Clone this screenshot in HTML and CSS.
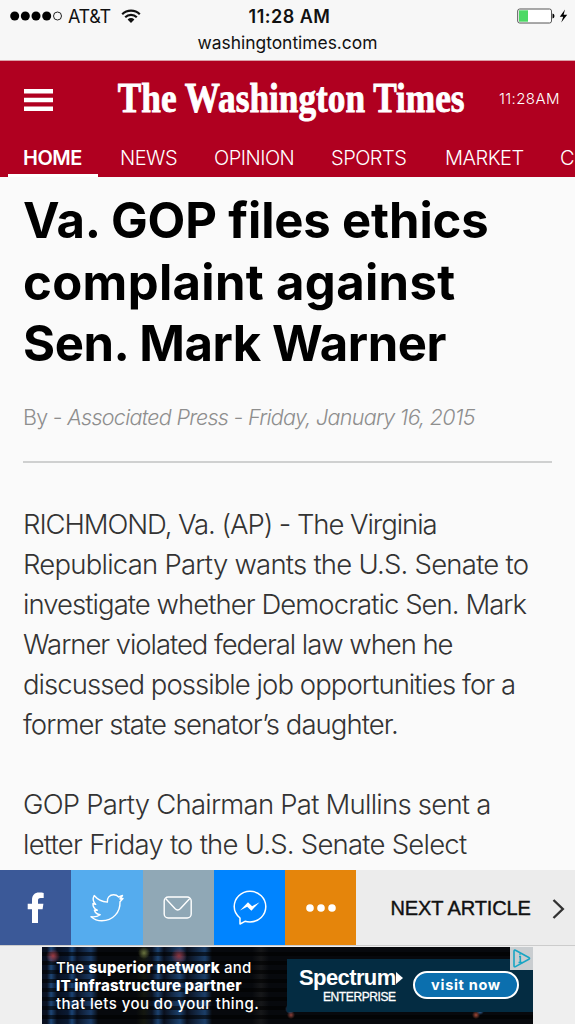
FILE: index.html
```html
<!DOCTYPE html>
<html lang="en">

<head>
    <meta charset="UTF-8">
    <meta name="viewport" content="width=device-width, initial-scale=1.0">
    <title>Va. GOP files ethics complaint against Sen. Mark Warner</title>
    <link rel="stylesheet" href="styles.css">
</head>

<body>
    <div class="status">
        <div class="carrier">
            <svg class="signal" width="53" height="10" viewBox="0 0 53 10">
                <circle cx="4.7" cy="5" r="4.5" />
                <circle cx="15.3" cy="5" r="4.5" />
                <circle cx="26" cy="5" r="4.5" />
                <circle cx="36.7" cy="5" r="4.5" />
                <circle class="empty" cx="47.5" cy="5" r="4" />
            </svg>
            <span class="name">AT&amp;T</span>
            <svg class="wifi" width="20" height="15" viewBox="0 0 20 15">
                <path d="M1.2 5.2a12.5 12.5 0 0 1 17.6 0M4.2 8.2a8.2 8.2 0 0 1 11.6 0" />
                <path class="dot" d="M6.6 10.4a4.9 4.9 0 0 1 6.8 0L10 14z" />
            </svg>
        </div>
        <div class="clock">11:28 AM</div>
        <div class="power">
            <svg width="52" height="16" viewBox="0 0 52 16">
                <rect class="case" x=".7" y="1" width="33.8" height="14" rx="2" />
                <rect class="level" x="2" y="2.3" width="9" height="11.4" />
                <path d="M35.5 5.5q2 .4 2 2.5t-2 2.5z" />
                <path d="M48 1.5l-5.2 7.2h3.4l-2 5.8 6-7.7h-3.6z" />
            </svg>
        </div>
        <div class="url">washingtontimes.com</div>
    </div>

    <header class="header">
        <div class="masthead">
            <svg class="menu" width="29" height="22" viewBox="0 0 29 22">
                <path d="M0 0h29v4.4H0zM0 8.8h29v4.4H0zM0 17.6h29V22H0z" />
            </svg>
            <svg class="logo" width="347" height="54" viewBox="0 0 347 54">
                <text transform="scale(.82 1)" x="1" y="39">The Washington Times</text>
            </svg>
            <span class="time">11:28AM</span>
        </div>
        <nav class="nav">
            <a class="active">HOME</a>
            <a class="news">NEWS</a>
            <a class="opinion">OPINION</a>
            <a class="sports">SPORTS</a>
            <a class="market">MARKET</a>
            <a class="last">C</a>
        </nav>
    </header>

    <main class="article">
        <h1>Va. GOP files ethics<br><span class="loose">complaint against</span><br><span class="tight">Sen. Mark Warner</span></h1>
        <p class="byline">By - <em>Associated Press - Friday, January 16, 2015</em></p>
        <div class="story">
            <p><span class="tight">RICHMOND, Va. (AP) - The Virginia</span><br>
                <span class="loose">Republican Party wants the U.S. Senate to</span><br>
                investigate whether Democratic Sen. Mark<br>
                <span class="tight">Warner violated federal law when he</span><br>
                discussed possible job opportunities for a<br>
                former state senator’s daughter.</p>
            <p class="loose">GOP Party Chairman Pat Mullins sent a<br>
                letter Friday to the U.S. Senate Select</p>
        </div>
    </main>

    <div class="share">
        <a class="facebook">
            <svg width="18" height="32" viewBox="0 0 18 32">
                <path d="M5 31V17.2H.7v-5.5H5V8.2C5 3.2 7.8.6 12 .6c2 0 3.6.1 4.7.3v5.2h-3c-2.2 0-2.7 1-2.7 2.6v3h5.4l-.8 5.5H11V31z" />
            </svg>
        </a>
        <a class="twitter">
            <svg width="34" height="28" viewBox="0 0 34 28">
                <path d="M1 22.7c3.5.5 6.7-.2 9.2-2-3-.4-5-2-5.8-4.5h2.9C4.5 15 2.8 12.5 2.9 9.6l2.8.8C3.2 8 2.5 4.6 4.2 1.5c3.3 4 7.9 6.2 13.2 6.6C16.7 4 19.6.8 23.6.8c2 0 3.8.8 5.1 2.2L32.5 1.5 30 5l3-.5-3 3.2C30.5 18 23 26.8 11.8 26.8 7.7 26.8 4 25.3 1 22.7z" />
            </svg>
        </a>
        <a class="mail">
            <svg width="30" height="23" viewBox="0 0 30 23">
                <rect x="1.2" y="1" width="27" height="21" rx="4" />
                <path d="M2.6 2.5l9.3 10q2.8 2.8 5.6 0l9.3-10" />
            </svg>
        </a>
        <a class="messenger">
            <svg width="34" height="36" viewBox="0 0 34 36">
                <path d="M7 34V28C3.5 25.2 1.2 21.2 1.2 16.6 1.2 8 8.2 1.2 17 1.2S32.8 8 32.8 16.6 25.8 32 17 32c-1.8 0-3.5-.2-5-.7z" />
                <path class="bolt" d="M7 20.5l8-8.3 4.1 4 7.4-4-8.1 8.5-4.2-4z" />
            </svg>
        </a>
        <a class="more">
            <svg width="30" height="8" viewBox="0 0 30 8">
                <circle cx="4" cy="4" r="3.8" />
                <circle cx="15" cy="4" r="3.8" />
                <circle cx="26" cy="4" r="3.8" />
            </svg>
        </a>
        <a class="next">
            <span>NEXT ARTICLE</span>
            <svg width="13" height="20" viewBox="0 0 13 20">
                <path d="M1.5 1l9.3 9-9.3 9" />
            </svg>
        </a>
    </div>

    <div class="bottom">
        <div class="ad">
            <p class="slogan">The <b>superior network</b> and<br><b>IT infrastructure partner</b><br><span class="last">that lets you do your thing.</span></p>
            <div class="panel">
                <div class="brand">
                    <div class="spectrum">
                        <span>Spectrum</span>
                        <svg width="7" height="12" viewBox="0 0 7 12">
                            <path d="M0 0l7 6-7 6z" />
                        </svg>
                    </div>
                    <div class="enterprise">ENTERPRISE</div>
                </div>
                <a class="visit">visit now</a>
            </div>
            <svg class="choices" width="23" height="23" viewBox="0 0 23 23">
                <path d="M4 4.2q0-1.6 1.5-.9l13.3 7.2q1.5.9 0 1.8L5.5 19.6Q4 20.3 4 18.7z" />
                <path d="M9 9.5h1.3v6M8.5 15.5h4M10 6.5v1.2" />
            </svg>
        </div>
    </div>
</body>

</html>
```
FILE: styles.css
```css
* {
    margin: 0;
    padding: 0;
    box-sizing: border-box;
}

body {
    display: flex;
    flex-direction: column;
    width: 575px;
    height: 1024px;
    overflow: hidden;
    background-color: #fafafa;
    font-family: "Liberation Sans", Arial, sans-serif;
}

svg {
    display: block;
    flex: none;
}

/* status bar */
.status {
    display: grid;
    grid-template-columns: 1fr auto 1fr;
    grid-template-rows: 32px 20px;
    align-items: center;
    flex: none;
    height: 61px;
    padding-left: 10px;
    padding-right: 6px;
    border-bottom: 1px solid #dba0a8;
    background-color: #f7f7f7;
    font-family: Inter, sans-serif;
    color: #111;
}

.carrier {
    display: flex;
    align-items: center;
}

.signal .empty {
    fill: none;
    stroke: #222;
    stroke-width: 1;
}

.name {
    margin-left: 5px;
    font-size: 18px;
    letter-spacing: -0.3px;
}

.wifi {
    margin-left: 10px;
    fill: none;
    stroke: #111;
    stroke-width: 2.2;
}

.wifi .dot {
    fill: #111;
    stroke: none;
}

.clock {
    font-size: 18px;
    font-weight: 600;
    letter-spacing: 0.5px;
}

.power {
    justify-self: end;
}

.power .case {
    fill: #fff;
    stroke: #555;
    stroke-width: 1;
}

.power .level {
    fill: #4cd964;
}

.url {
    grid-column: 1 / 4;
    justify-self: center;
    padding-right: 4px;
    font-size: 17.4px;
}

/* header */
.header {
    flex: none;
    height: 116px;
    background-color: #b00020;
    color: #fff;
}

.masthead {
    display: flex;
    align-items: center;
    height: 78px;
    padding-left: 24px;
}

.menu {
    fill: #fff;
}

.logo {
    margin-left: 64px;
    overflow: visible;
    fill: #fff;
    stroke: #fff;
    stroke-width: 0.9;
    font-family: "Liberation Serif", serif;
    font-size: 43px;
    font-weight: bold;
}

.time {
    margin-left: 35px;
    padding-bottom: 4px;
    font-family: Inter, sans-serif;
    font-size: 15px;
    font-weight: 300;
    letter-spacing: 0.4px;
}

.nav {
    display: flex;
    height: 38px;
    padding-left: 8px;
    font-family: Inter, sans-serif;
    font-size: 20px;
    font-weight: 300;
    line-height: 38px;
    white-space: nowrap;
}

.nav a {
    flex: none;
    letter-spacing: -0.5px;
}

.nav .active {
    width: 90px;
    padding-left: 15px;
    border-bottom: 3px solid #fff;
    font-weight: 600;
}

.nav .news {
    width: 94px;
    margin-left: 22px;
}

.nav .opinion {
    width: 117px;
}

.nav .sports {
    width: 114px;
}

.nav .market {
    width: 115px;
}

/* article */
.article {
    flex: 1;
    min-height: 0;
    padding: 13px 23px 0;
    overflow: hidden;
}

h1 {
    font-family: Inter, sans-serif;
    font-size: 49px;
    font-weight: 700;
    line-height: 61.5px;
    letter-spacing: -0.15px;
    color: #000;
    white-space: nowrap;
}

h1 .loose {
    letter-spacing: 0.35px;
}

h1 .tight {
    letter-spacing: -0.4px;
}

.byline {
    height: 88px;
    padding-top: 27px;
    border-bottom: 2px solid #cfd0d0;
    font-family: Inter, sans-serif;
    font-size: 21.5px;
    font-weight: 300;
    line-height: 30px;
    letter-spacing: -0.7px;
    color: #8e8e8e;
    white-space: nowrap;
}

.story {
    padding-top: 41px;
    font-family: Inter, sans-serif;
    font-size: 27.5px;
    font-weight: 300;
    line-height: 40px;
    letter-spacing: -0.95px;
    color: #333;
    white-space: nowrap;
}

.story p {
    margin-bottom: 40px;
}

.story .loose {
    letter-spacing: -0.76px;
}

.story .tight {
    letter-spacing: -1.06px;
}

/* share bar */
.share {
    display: flex;
    flex: none;
    height: 76px;
    border-bottom: 1px solid #ccc;
    background-color: #ececec;
}

.share a {
    display: flex;
    align-items: center;
    justify-content: center;
    width: 71.3px;
}

.share .facebook {
    background-color: #3b5998;
    fill: #fff;
}

.share .twitter {
    background-color: #55acee;
    fill: none;
    stroke: #fff;
    stroke-width: 1.4;
    stroke-linejoin: round;
}

.share .mail {
    background-color: #90a8b6;
    fill: none;
    stroke: #fff;
    stroke-width: 1.4;
}

.share .messenger {
    background-color: #0084ff;
    fill: none;
    stroke: #fff;
    stroke-width: 1.5;
    stroke-linejoin: round;
}

.share .messenger .bolt {
    fill: #fff;
    stroke: none;
}

.share .more {
    background-color: #e5850b;
    fill: #fff;
}

.share .next {
    justify-content: flex-start;
    flex: 1;
    padding-top: 2px;
    padding-left: 34px;
    font-size: 20px;
    letter-spacing: -0.1px;
    color: #111;
    white-space: nowrap;
}

.next span {
    -webkit-text-stroke: 0.4px #111;
}

.next svg {
    margin-left: 21px;
    fill: none;
    stroke: #333;
    stroke-width: 2.4;
}

/* ad */
.bottom {
    display: flex;
    flex: none;
    height: 78px;
    padding-top: 1px;
    padding-left: 42px;
    background-color: #efefef;
}

.ad {
    position: relative;
    display: flex;
    align-items: flex-start;
    width: 491px;
    background-color: #07090d;
    background-image:
        radial-gradient(circle at 11px 9px, #9c3a42 0, transparent 7px),
        radial-gradient(circle at 137px 9px, #8c3440 0, transparent 8px),
        radial-gradient(circle at 102px 6px, #6b7440 0, transparent 6px),
        radial-gradient(circle at 248px 62px, #3b76b8 0, transparent 5px),
        radial-gradient(circle at 249px 68px, #8b4038 0, transparent 4px),
        radial-gradient(circle at 434px 68px, #a34a38 0, transparent 4px),
        radial-gradient(circle at 438px 64px, #3b76b8 0, transparent 4px),
        repeating-linear-gradient(to bottom, transparent 0 5px, rgba(0, 0, 0, 0.6) 5px 9px),
        linear-gradient(to right, #091020 5px, #1e4777 9px, #081020 15px, #0a1a33 26px, #1b4475 30px, #0b1426 35px, #1a3b66 49px, #07090d 56px, #07090d 94px, #14170f 102px, #0a1120 110px, #1c426f 116px, #0a0f1c 122px, #1c426f 138px, #0a0f1c 145px, #1b3e68 163px, #07090d 170px, #07090d 210px, #161719 219px, #07090d 227px);
    color: #fff;
}

.slogan {
    width: 245px;
    padding-top: 12px;
    padding-left: 14px;
    font-family: Inter, sans-serif;
    font-size: 15px;
    font-weight: 500;
    line-height: 18px;
    letter-spacing: 0.2px;
    white-space: nowrap;
}

.slogan b {
    font-weight: 800;
}

.slogan .last {
    letter-spacing: 0.43px;
}

.panel {
    display: flex;
    align-items: flex-start;
    flex: 1;
    height: 53px;
    margin-top: 12px;
    padding-left: 12px;
    background-color: #042c42;
}

.brand {
    width: 114px;
    padding-top: 7px;
}

.spectrum {
    display: flex;
    align-items: center;
    height: 24px;
    font-size: 22px;
    font-weight: bold;
    letter-spacing: -0.6px;
}

.spectrum svg {
    fill: #fff;
}

.enterprise {
    padding-left: 24px;
    font-size: 12px;
    line-height: 14px;
    letter-spacing: -0.4px;
    -webkit-text-stroke: 0.3px #fff;
}

.visit {
    width: 106px;
    height: 28px;
    margin-top: 12px;
    border: 2px solid #fff;
    border-radius: 14px;
    background-color: #0b6fae;
    font-family: Inter, sans-serif;
    font-size: 14.5px;
    font-weight: 700;
    line-height: 24px;
    letter-spacing: 0.7px;
    text-align: center;
}

.choices {
    position: absolute;
    top: 0;
    right: 0;
    background-color: #c9cdd0;
    fill: none;
    stroke: #18a5c4;
    stroke-width: 1.6;
}
```
